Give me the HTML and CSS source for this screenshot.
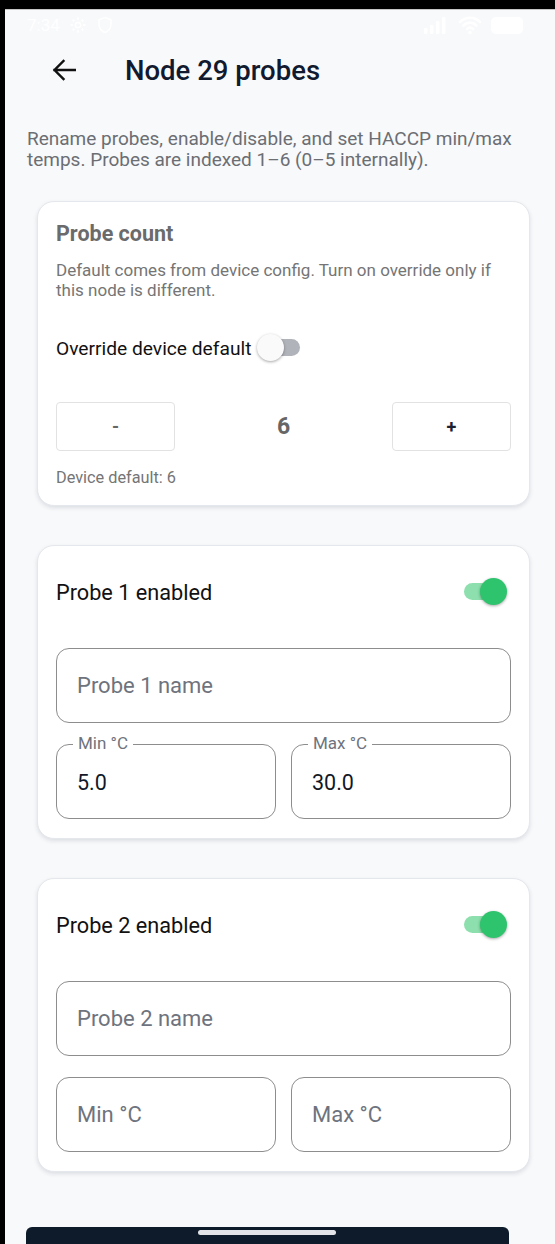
FILE: index.html
```html
<!DOCTYPE html>
<html lang="en">
<head>
<meta charset="utf-8">
<title>Node 29 probes</title>
<link rel="stylesheet" href="styles.css">
</head>
<body>
<div class="device">
  <div class="screen">
    <div class="statusbar">
      <div class="sb-left">
        <span class="sb-time">7:34</span>
        <svg class="sb-icon" viewBox="0 0 24 24" width="18" height="18"><circle cx="12" cy="12" r="3.5" fill="none" stroke="#fff" stroke-width="2"/><path d="M12 2v3M12 19v3M2 12h3M19 12h3M4.9 4.9l2.1 2.1M17 17l2.1 2.1M4.9 19.1L7 17M17 7l2.1-2.1" stroke="#fff" stroke-width="2.4"/></svg>
        <svg class="sb-icon" viewBox="0 0 24 24" width="18" height="18"><path d="M12 2l8 3v6c0 5-3.5 9-8 11-4.5-2-8-6-8-11V5z" fill="none" stroke="#fff" stroke-width="2"/></svg>
      </div>
      <div class="sb-right">
        <svg viewBox="0 0 26 20" width="26" height="20"><rect x="1" y="13" width="3.5" height="6" rx="1" fill="#fff"/><rect x="7" y="10" width="3.5" height="9" rx="1" fill="#fff"/><rect x="13" y="6" width="3.5" height="13" rx="1" fill="#fff"/><rect x="19" y="2" width="3.5" height="17" rx="1" fill="#fff"/></svg>
        <svg viewBox="0 0 24 20" width="24" height="20"><path d="M2 7a14 14 0 0 1 20 0M5.5 10.5a9 9 0 0 1 13 0M9 14a4 4 0 0 1 6 0" fill="none" stroke="#fff" stroke-width="2.6" stroke-linecap="round"/><circle cx="12" cy="17.5" r="1.8" fill="#fff"/></svg>
        <span class="sb-battery"></span>
      </div>
    </div>

    <header class="appbar">
      <svg class="back" viewBox="0 0 24 22" width="24" height="22"><path d="M23 11H2.5M11.5 2L2.5 11l9 9" fill="none" stroke="#111" stroke-width="2.4" stroke-linecap="square"/></svg>
      <h1 class="title">Node 29 probes</h1>
    </header>

    <main class="content">
      <p class="intro">Rename probes, enable/disable, and set HACCP min/max temps. Probes are indexed 1–6 (0–5 internally).</p>

      <section class="card count-card">
        <h2 class="card-title">Probe count</h2>
        <p class="card-desc">Default comes from device config. Turn on override only if this node is different.</p>
        <div class="override-row">
          <span class="override-label">Override device default</span>
          <span class="switch off"><span class="track"></span><span class="thumb"></span></span>
        </div>
        <div class="stepper">
          <button class="step-btn minus">-</button>
          <span class="step-value">6</span>
          <button class="step-btn plus">+</button>
        </div>
        <p class="device-default">Device default: 6</p>
      </section>

      <section class="card probe-card">
        <div class="enable-row">
          <span class="enable-label">Probe 1 enabled</span>
          <span class="switch on"><span class="track"></span><span class="thumb"></span></span>
        </div>
        <div class="field name-field"><span class="placeholder">Probe 1 name</span></div>
        <div class="range-row">
          <div class="field filled"><span class="float-label">Min °C</span><span class="value">5.0</span></div>
          <div class="field filled"><span class="float-label">Max °C</span><span class="value">30.0</span></div>
        </div>
      </section>

      <section class="card probe-card">
        <div class="enable-row">
          <span class="enable-label">Probe 2 enabled</span>
          <span class="switch on"><span class="track"></span><span class="thumb"></span></span>
        </div>
        <div class="field name-field"><span class="placeholder">Probe 2 name</span></div>
        <div class="range-row">
          <div class="field"><span class="placeholder">Min °C</span></div>
          <div class="field"><span class="placeholder">Max °C</span></div>
        </div>
      </section>

      <div class="bottom-bar"></div>
    </main>
    <div class="home-indicator"></div>
  </div>
</div>
</body>
</html>
```

FILE: styles.css
```css
html, body {
  margin: 0;
  height: 100%;
  overflow: hidden;
  background: #000;
}

.device {
  height: 1244px;
  padding: 9px 0 0 5px;
  box-sizing: border-box;
}

.screen {
  position: relative;
  height: 100%;
  background: #f8f9fb;
  border-top: 1px solid #c6c6c6;
  overflow: hidden;
  font-family: Roboto, "Noto Sans", Arial, sans-serif;
  color: #111;
}

/* status bar */
.statusbar {
  height: 30px;
  display: flex;
  align-items: center;
  justify-content: space-between;
  padding: 0 32px 0 22px;
}
.sb-left, .sb-right {
  display: flex;
  align-items: center;
  gap: 9px;
}
.sb-time {
  color: #fff;
  font-size: 17px;
}
.sb-battery {
  width: 32px;
  height: 17px;
  background: #fff;
  border-radius: 5px;
}

/* app bar */
.appbar {
  height: 60px;
  display: flex;
  align-items: center;
  padding-left: 47px;
}
.back {
  display: block;
}
.title {
  margin: 0 0 0 49px;
  font-size: 27.5px;
  font-weight: 500;
  color: #111a2e;
}

/* content */
.content {
  padding: 0 25px 0 22px;
}
.intro {
  margin: 28px 0 0;
  font-size: 19px;
  line-height: 21px;
  color: #6b6e73;
}

.card {
  margin: 31px 0 0 10px;
  background: #fff;
  border: 1px solid #e4e7ec;
  border-radius: 17px;
  box-shadow: 0 2px 4px rgba(20, 30, 50, 0.12);
  padding: 0 18px;
}
.card + .card {
  margin-top: 39px;
}

/* probe count card */
.count-card {
  padding-top: 20px;
  padding-bottom: 18px;
}
.card-title {
  margin: 0;
  font-size: 21.5px;
  line-height: 24px;
  font-weight: 700;
  color: #6b6b6b;
}
.card-desc {
  margin: 14px 0 0;
  font-size: 17px;
  line-height: 20px;
  color: #757575;
}
.override-row {
  margin-top: 33px;
  display: flex;
  align-items: center;
  height: 30px;
}
.override-label {
  font-size: 19.2px;
  color: #111;
}

.switch {
  position: relative;
  display: inline-block;
  width: 44px;
  height: 30px;
}
.switch .track {
  position: absolute;
  top: 6px;
  height: 17px;
  border-radius: 9px;
}
.switch .thumb {
  position: absolute;
  top: 1px;
  width: 27px;
  height: 27px;
  border-radius: 50%;
  box-shadow: 0 1px 3px rgba(0, 0, 0, 0.35);
}
.switch.off {
  margin-left: 6px;
}
.switch.off .track {
  left: 7px;
  width: 36px;
  background: #b0b3b9;
}
.switch.off .thumb {
  left: 0;
  background: #fafafa;
}
.switch.on .track {
  left: 0;
  width: 34px;
  background: #8ddfad;
}
.switch.on .thumb {
  left: 16px;
  background: #2ec46d;
}

.stepper {
  margin-top: 39px;
  display: flex;
  align-items: center;
  justify-content: space-between;
}
.step-btn {
  width: 119px;
  height: 49px;
  background: #fff;
  border: 1px solid #e2e2e2;
  border-radius: 4px;
  font-family: Roboto, Arial, sans-serif;
  font-size: 18px;
  font-weight: 700;
  color: #1b2233;
  padding: 0;
}
.step-btn.minus {
  color: #666;
}
.step-value {
  font-size: 23px;
  font-weight: 700;
  color: #666;
}
.device-default {
  margin: 18px 0 0;
  font-size: 16.3px;
  line-height: 18px;
  color: #757575;
}

/* probe cards */
.probe-card {
  padding-top: 22px;
  padding-bottom: 19px;
}
.enable-row {
  height: 48px;
  display: flex;
  align-items: center;
  justify-content: space-between;
}
.enable-label {
  font-size: 21.7px;
  color: #111;
}
.switch.on {
  margin-right: 3px;
}

.field {
  position: relative;
  height: 75px;
  border: 1px solid #8d8d8d;
  border-radius: 13px;
  display: flex;
  align-items: center;
  padding: 0 20px;
  box-sizing: border-box;
}
.name-field {
  margin-top: 32px;
}
.placeholder {
  font-size: 22px;
  color: #6e737d;
}
.range-row {
  margin-top: 21px;
  display: grid;
  grid-template-columns: 1fr 1fr;
  gap: 15px;
}
.value {
  font-size: 21.5px;
  color: #111827;
  margin-top: 2px;
}
.float-label {
  position: absolute;
  top: -12px;
  left: 16px;
  padding: 0 5px;
  background: #fff;
  font-size: 17px;
  line-height: 20px;
  color: #6e737d;
}

.bottom-bar {
  margin: 55px 0 0 -1px;
  width: 483px;
  height: 60px;
  background: #0d1b2a;
  border-radius: 6px 6px 0 0;
}
.home-indicator {
  position: absolute;
  left: 193px;
  top: 1220px;
  width: 138px;
  height: 5px;
  border-radius: 3px;
  background: #e2e4e8;
}
```
